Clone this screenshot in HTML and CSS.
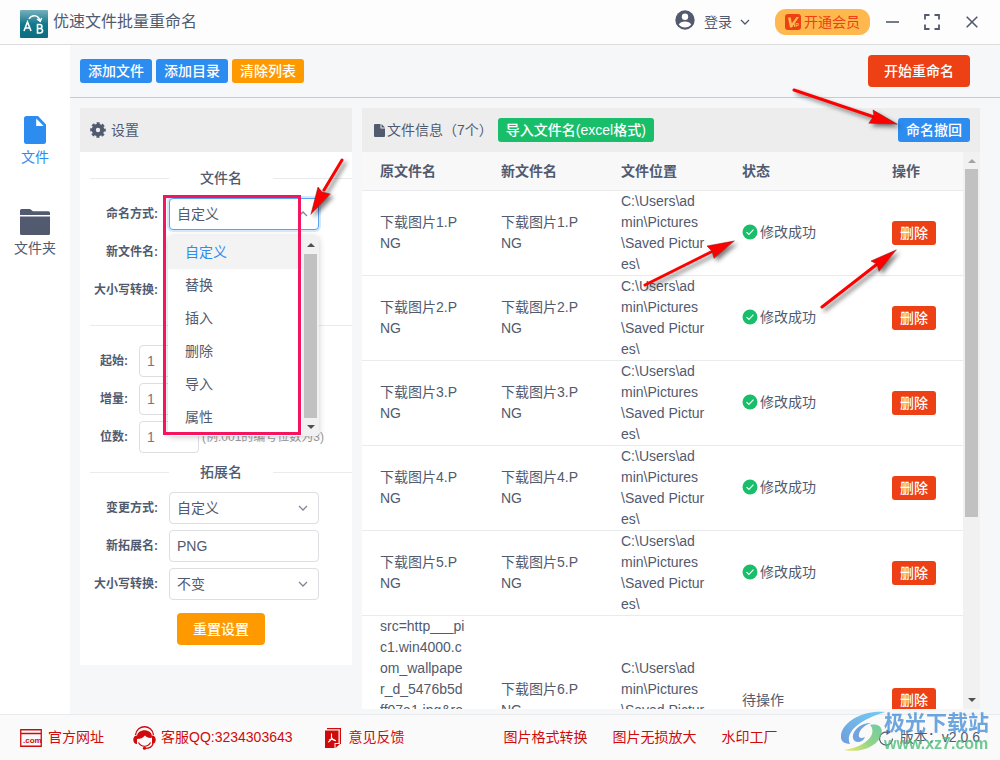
FILE: index.html
```html
<!DOCTYPE html>
<html lang="zh-CN">
<head>
<meta charset="utf-8">
<title>优速文件批量重命名</title>
<link rel="stylesheet" href="styles.css">
</head>
<body>
<svg class="defs" width="0" height="0" aria-hidden="true">
  <symbol id="chevron" viewBox="0 0 10 6"><path d="M1 1l4 4 4-4" fill="none" stroke="currentColor" stroke-width="1.3"/></symbol>
  <symbol id="ok" viewBox="0 0 16 16"><circle cx="8" cy="8" r="7.5" fill="#19be6b"/><path d="M4.5 8.2l2.4 2.3 4.6-4.8" fill="none" stroke="#fff" stroke-width="1.1"/></symbol>
</svg>
<div class="app">
  <header class="titlebar">
    <svg class="logo" width="28" height="28" viewBox="0 0 28 28">
      <defs><linearGradient id="lg" x1="0" y1="0" x2="0" y2="1"><stop offset="0" stop-color="#78b0bd"/><stop offset=".5" stop-color="#12788c"/><stop offset="1" stop-color="#0a6e80"/></linearGradient></defs>
      <rect width="28" height="28" rx="1" fill="url(#lg)"/>
      <g fill="none" stroke="#fff" stroke-width="1.6">
        <path d="M4 21l3.500-9 3.500 9M5.200 18h4.600"/>
        <path d="M17.500 14.500v8.500h2.500c3.400 0 3.400-4.500 0-4.500h-2.500h2.300c2.800 0 2.800-4 0-4z"/>
        <path d="M9 9c2.500-4.500 9-4.500 11 1.500M17 9l3.200 2.400 1.500-3.400" stroke-width="1.4"/>
      </g>
    </svg>
    <h1 class="title">优速文件批量重命名</h1>
    <button class="plain login">
      <svg width="20" height="20" viewBox="0 0 20 20"><circle cx="10" cy="10" r="9.700" fill="currentColor"/><circle cx="10" cy="6.700" r="3.200" fill="#fff"/><path d="M3.800 14.400c1.700-4 10.700-4 12.400 0-2.800 4-9.600 4-12.400 0z" fill="#fff"/></svg>
      <span>登录</span>
      <svg width="10" height="6"><use href="#chevron"/></svg>
    </button>
    <button class="vip">
      <svg width="16" height="16" viewBox="0 0 16 16"><rect width="16" height="16" rx="3" fill="#ed4014"/><path d="M3 3.500h2.800l1 6 4.700-6.500h2.500L7 13.500H5z" fill="#ffb84d"/><path d="M9.500 13V9.500M11 13V9.500h2.300v2H11" stroke="#ffb84d" stroke-width=".9" fill="none"/></svg>
      <span>开通会员</span>
    </button>
    <button class="plain win min" aria-label="最小化"><svg width="14" height="16" viewBox="0 0 14 16"><path d="M0 8h13" stroke="currentColor" stroke-width="1.600"/></svg></button>
    <button class="plain win max" aria-label="最大化"><svg width="16" height="16" viewBox="0 0 16 16"><path d="M1 5.500V1h4.500M10.500 1H15v4.500M15 10.500V15h-4.500M5.500 15H1v-4.500" fill="none" stroke="currentColor" stroke-width="1.800"/></svg></button>
    <button class="plain win" aria-label="关闭"><svg width="12" height="12" viewBox="0 0 12 12"><path d="M.7.700l10.600 10.600M11.300.700L.7 11.300" stroke="currentColor" stroke-width="1.600"/></svg></button>
  </header>

  <div class="body">
    <nav class="side">
      <a class="nav active" href="#">
        <svg width="22" height="28" viewBox="0 0 22 28"><path d="M2.500 0H14l8 8.500V25.500a2.500 2.500 0 0 1-2.500 2.500h-17A2.500 2.500 0 0 1 0 25.500v-23A2.500 2.500 0 0 1 2.500 0z" fill="currentColor"/><path d="M12.200 2.500v7.500h7.500z" fill="#fff"/></svg>
        <span>文件</span>
      </a>
      <a class="nav" href="#">
        <svg width="30" height="26" viewBox="0 0 30 26"><path d="M0 6V1.500Q0 0 1.500 0H10l3 2.200h15.500Q30 2.200 30 3.700V6zM0 7.500h30V24.500q0 1.500-1.500 1.500h-27Q0 26 0 24.500z" fill="currentColor"/></svg>
        <span>文件夹</span>
      </a>
    </nav>

    <main class="main">
      <div class="toolbar">
        <button class="btn blue">添加文件</button>
        <button class="btn blue">添加目录</button>
        <button class="btn orange">清除列表</button>
        <button class="btn big red end">开始重命名</button>
      </div>

      <div class="content">
        <form class="settings">
          <div class="panel-head">
            <svg class="gear" width="16" height="16" viewBox="0 0 16 16"><g fill="none" stroke="currentColor"><circle cx="8" cy="8" r="4.200" stroke-width="4"/><circle cx="8" cy="8" r="6.600" stroke-width="2.400" stroke-dasharray="3 2.184" stroke-dashoffset="1.500"/></g></svg>
            <span>设置</span>
          </div>
          <div class="fields">
            <h2 class="divider">文件名</h2>
            <div class="rows">
              <div class="row">
                <label for="mode">命名方式:</label>
                <div class="select focus">
                  <select id="mode"><option>自定义</option></select>
                  <svg class="chev up" width="10" height="6"><use href="#chevron"/></svg>
                  <div class="menu">
                    <ul class="options">
                      <li class="chosen">自定义</li><li>替换</li><li>插入</li><li>删除</li><li>导入</li><li>属性</li>
                    </ul>
                    <div class="bar"><i class="tri up"></i><i class="thumb"></i><i class="tri down"></i></div>
                  </div>
                  <div class="mark"></div>
                </div>
              </div>
              <div class="row"><label for="name">新文件名:</label><input class="box" id="name" type="text"></div>
              <div class="row"><label for="case">大小写转换:</label><div class="select"><select id="case"></select></div></div>
            </div>
            <hr class="line">
            <div class="rows nums">
              <div class="row"><label for="start">起始:</label><input class="box" id="start" type="text" value="1"></div>
              <div class="row"><label for="step">增量:</label><input class="box" id="step" type="text" value="1"></div>
              <div class="row"><label for="digits">位数:</label><input class="box" id="digits" type="text" value="1"><span class="hint">(例:001的编号位数为3)</span></div>
            </div>
            <h2 class="divider second">拓展名</h2>
            <div class="rows">
              <div class="row"><label for="extmode">变更方式:</label><div class="select"><select id="extmode"><option>自定义</option></select><svg class="chev" width="10" height="6"><use href="#chevron"/></svg></div></div>
              <div class="row"><label for="ext">新拓展名:</label><input class="box" id="ext" type="text" value="PNG"></div>
              <div class="row"><label for="extcase">大小写转换:</label><div class="select"><select id="extcase"><option>不变</option></select><svg class="chev" width="10" height="6"><use href="#chevron"/></svg></div></div>
            </div>
            <button type="button" class="btn big orange reset">重置设置</button>
          </div>
        </form>

        <section class="list">
          <div class="panel-head files">
            <svg width="11" height="13" viewBox="0 0 11 13"><path d="M1 0h5.500v4.500H11V12q0 1-1 1H1q-1 0-1-1V1q0-1 1-1zM7.500 0L11 3.500H7.500z" fill="currentColor"/></svg>
            <span>文件信息（7个）</span>
            <button class="btn green">导入文件名(excel格式)</button>
            <button class="btn blue end">命名撤回</button>
          </div>
          <div class="scroll">
            <div class="view">
              <table>
                <colgroup><col class="c1"><col class="c2"><col class="c1"><col class="c4"><col></colgroup>
                <thead><tr><th>原文件名</th><th>新文件名</th><th>文件位置</th><th>状态</th><th>操作</th></tr></thead>
                <tbody>
                  <tr><td>下载图片1.PNG</td><td>下载图片1.PNG</td><td>C:\Users\admin\Pictures\Saved Pictures\</td><td><span class="done"><svg width="16" height="16"><use href="#ok"/></svg>修改成功</span></td><td><button class="btn red">删除</button></td></tr>
                  <tr><td>下载图片2.PNG</td><td>下载图片2.PNG</td><td>C:\Users\admin\Pictures\Saved Pictures\</td><td><span class="done"><svg width="16" height="16"><use href="#ok"/></svg>修改成功</span></td><td><button class="btn red">删除</button></td></tr>
                  <tr><td>下载图片3.PNG</td><td>下载图片3.PNG</td><td>C:\Users\admin\Pictures\Saved Pictures\</td><td><span class="done"><svg width="16" height="16"><use href="#ok"/></svg>修改成功</span></td><td><button class="btn red">删除</button></td></tr>
                  <tr><td>下载图片4.PNG</td><td>下载图片4.PNG</td><td>C:\Users\admin\Pictures\Saved Pictures\</td><td><span class="done"><svg width="16" height="16"><use href="#ok"/></svg>修改成功</span></td><td><button class="btn red">删除</button></td></tr>
                  <tr><td>下载图片5.PNG</td><td>下载图片5.PNG</td><td>C:\Users\admin\Pictures\Saved Pictures\</td><td><span class="done"><svg width="16" height="16"><use href="#ok"/></svg>修改成功</span></td><td><button class="btn red">删除</button></td></tr>
                  <tr><td>src=http___pic1.win4000.com_wallpaper_d_5476b5dff07a1.jpg&amp;refer=http___pic1.win4000.com.jpg</td><td>下载图片6.PNG</td><td>C:\Users\admin\Pictures\Saved Pictures\</td><td>待操作</td><td><button class="btn red">删除</button></td></tr>
                </tbody>
              </table>
            </div>
            <div class="bar wide"><i class="tri up dim"></i><i class="thumb"></i><i class="tri down"></i></div>
          </div>
        </section>
      </div>
    </main>
  </div>

  <footer class="footer">
    <a class="site" href="#">
      <svg width="22" height="18" viewBox="0 0 22 18"><path d="M.75.750h20.500v16.500H.75zM.75 4.500h20.500" fill="none" stroke="currentColor" stroke-width="1.300"/><text class="com" x="3" y="14">.com</text></svg>
      <span>官方网址</span>
    </a>
    <a class="service" href="#">
      <svg width="23" height="24" viewBox="0 0 23 24"><path d="M2.500 9C4-2 19-2 20.500 9" fill="none" stroke="currentColor" stroke-width="1.300"/><path d="M4 10.500C4 2 19 2 19 10.500l-.5 1.500c-3 .3-5-.8-6.500-2.500-2 2.500-4.500 3.500-8 3.500z" fill="currentColor"/><path d="M4 9.500v8.500C-1 18-1 9.500 4 9.500zM19 9.500v8.500c5 0 5-8.500 0-8.500z" fill="currentColor"/><path d="M5.500 16.500c2.500 5 9.500 5 12 0M20 18c-1 3-4 4.500-8 4.500" fill="none" stroke="currentColor" stroke-width="1.200"/><circle cx="11.500" cy="22.200" r="1.600" fill="currentColor"/></svg>
      <span>客服QQ:3234303643</span>
    </a>
    <a class="feedback" href="#">
      <svg width="16" height="20" viewBox="0 0 16 20"><path d="M2 .6h13.400V16" fill="none" stroke="currentColor" stroke-width="1.200"/><path d="M0 2.500h13.500V15h-4v5H0zM10.500 16H15l-4.500 4z" fill="currentColor"/><path d="M6.500 5.500v4c0 2-2 4-3.500 4.500M6.500 9.500c.8 2 2.500 3 4.500 3.200M4 12c2-.8 4-.8 6 0" fill="none" stroke="#fff" stroke-width="1.100"/></svg>
      <span>意见反馈</span>
    </a>
    <a class="first-tool" href="#">图片格式转换</a>
    <a class="tool" href="#">图片无损放大</a>
    <a class="tool" href="#">水印工厂</a>
    <div class="version">
      <svg width="16" height="18" viewBox="0 0 16 18"><path d="M9.500 3.300a6.500 6.500 0 1 0 5 6.200" fill="none" stroke="currentColor" stroke-width="1.200"/><path d="M8.500.500l4.500 2.500-4.500 3z" fill="currentColor"/></svg>
      <span>版本：v2.0.6</span>
      <div class="watermark">
        <svg width="44" height="42" viewBox="0 0 44 42">
          <defs>
            <linearGradient id="wb" x1="1" y1="0" x2="0" y2="1"><stop offset="0" stop-color="#55c4f2"/><stop offset="1" stop-color="#4b86d6"/></linearGradient>
            <linearGradient id="wg" x1="1" y1="0" x2="0" y2="1"><stop offset="0" stop-color="#52c08c"/><stop offset=".5" stop-color="#75cb70"/><stop offset="1" stop-color="#e8e645"/></linearGradient>
          </defs>
          <path d="M44 1C23-1 2 10 0 24c-1 6 3 9 9 9-5-10 6-23 35-32z" fill="url(#wb)"/>
          <path d="M29 14c9-2 15 3 10 13C33 37 18 42 3 39c14-2 25-8 28-16 1-4 0-7-2-9z" fill="url(#wg)"/>
          <path d="M30 12c-11 0-19 8-18 15 1 6 10 5 12-1-4 2-7 1-6-3 1-5 6-9 12-11z" fill="#4f8fd8"/>
        </svg>
        <div class="wm-text"><b class="wm-name">极光下载站</b><b class="wm-url">www.xz7.com</b></div>
      </div>
    </div>
  </footer>

  <svg class="arrows" width="1000" height="400" viewBox="0 0 1000 400" aria-hidden="true">
    <g fill="#f00" stroke="#f00" stroke-linecap="round" stroke-linejoin="round">
      <g stroke-width="3"><path d="M794 90L874 117M342 160L324 190M645 285L711 252M822 307L876 265"/></g>
      <g stroke="#7a1010" stroke-width=".5">
        <path d="M897 124L873 110l1 6-5 7z"/>
        <path d="M311 214l7-27 4 5 8 2z"/>
        <path d="M734 241l-27 5 5 5 2 7z"/>
        <path d="M896 250l-25 11 6 3 2 7z"/>
      </g>
    </g>
  </svg>
</div>
</body>
</html>
```

FILE: styles.css
```css
* { box-sizing: border-box; }
body {
  margin: 0;
  color: #515a6e;
  font: 14px/21px "Liberation Sans", "Noto Sans CJK SC", sans-serif;
}
button, input, select { font: inherit; color: inherit; margin: 0; }
button { cursor: pointer; }
a { color: inherit; text-decoration: none; }
h1, h2, ul { margin: 0; padding: 0; font-weight: 400; }
svg { display: block; flex: none; }
.defs { position: absolute; }
.app { position: relative; display: flex; flex-direction: column; height: 100vh; overflow: hidden; background: #fff; }

/* title bar */
.titlebar { display: flex; align-items: center; height: 45px; padding: 0 22px 0 20px; border-bottom: 1px solid #dcdcdc; background: #fdfdfd; }
.logo { margin-top: 4px; }
.title { margin-left: 5px; font-size: 16px; line-height: 24px; }
.plain { display: flex; align-items: center; padding: 0; border: 0; background: none; }
.login { gap: 8px; margin-left: auto; }
.login > svg:first-child { margin: 0 1px 4px 0; }
.vip { display: flex; align-items: center; gap: 3px; height: 26px; margin: 0 16px 0 25px; padding: 0 10px; border: 0; border-radius: 11px; background: #ffb84d; color: #ed4014; }
.win { margin-left: 26px; }
.min { margin-left: 0; }
.max { margin-left: 24px; }

/* side navigation */
.body { display: flex; flex: 1; min-height: 0; }
.side { display: flex; flex-direction: column; gap: 41px; width: 70px; padding-top: 71px; background: #fff; }
.nav { display: flex; flex-direction: column; align-items: center; gap: 3px; }
.active { color: #2d8cf0; }
.main { display: flex; flex-direction: column; flex: 1; min-width: 0; background: #f5f7f9; }

/* buttons */
.btn { height: 24px; padding: 0 7px; border: 1px solid transparent; border-radius: 3px; color: #fff; font-weight: 500; line-height: 21px; white-space: nowrap; }
.big { height: 32px; padding: 0 15px; border-radius: 4px; }
.blue { background: #2d8cf0; }
.orange { background: #f90; }
.red { background: #ed4014; }
.green { background: #19be6b; }
.end { margin-left: auto; }

.toolbar { display: flex; align-items: center; gap: 4px; padding: 10px 30px 10px 10px; border-bottom: 1px solid #c8cacd; }
.content { display: flex; flex: 1; gap: 10px; min-height: 0; padding: 10px 20px 5px 10px; }
.panel-head { display: flex; align-items: center; gap: 5px; height: 44px; padding: 0 10px; background: #ededed; }

/* settings */
.settings { align-self: flex-start; width: 272px; background: #fff; }
.fields { display: flex; flex-direction: column; padding: 15px 0 20px; }
.divider { display: flex; align-items: center; gap: 31px; margin-left: 10px; font-size: 14px; font-weight: 500; line-height: 22px; }
.divider::before, .divider::after { content: ""; flex: 1; border-top: 1px solid #e8eaec; }
.second { margin-top: 8px; }
.rows { display: flex; flex-direction: column; gap: 6px; margin-top: 9px; }
.row { display: flex; align-items: center; gap: 10px; }
.row label { width: 79px; padding-right: 1px; font-size: 12px; font-weight: 700; text-align: right; white-space: nowrap; }
.box, .select select { width: 150px; height: 32px; padding: 0 7px; border: 1px solid #dcdee2; border-radius: 4px; background: #fff; outline: 0; }
.select { position: relative; }
.select select { appearance: none; display: block; }
.chev { position: absolute; right: 11px; top: 13px; color: #808695; }
.chev.up { transform: rotate(180deg); }
.focus select { border-color: #57a3f3; box-shadow: 0 0 0 2px rgba(45, 140, 240, .2); }
.line { width: auto; margin: 19px 0 10px 10px; border: 0; border-top: 1px solid #e8eaec; }
.nums label { width: 49px; }
.nums .box { width: 60px; color: #777; }
.hint { margin-left: -7px; color: #999; font-size: 12px; white-space: nowrap; }
.reset { align-self: center; margin: 13px 0 0 10px; }

/* opened drop-down */
.menu { position: absolute; z-index: 2; top: 38px; left: -1px; display: flex; width: 151px; height: 200px; border-radius: 4px; background: #fff; box-shadow: 0 1px 6px rgba(0, 0, 0, .2); overflow: hidden; }
.options { flex: 1; list-style: none; }
.options li { padding: 6px 17px; }
.options .chosen { background: #f3f3f3; color: #2d8cf0; }
.mark { position: absolute; z-index: 3; top: -3px; left: -6px; width: 138px; height: 240px; border: 3px solid #f5145f; }
.bar { display: flex; flex-direction: column; align-items: center; gap: 7px; width: 17px; padding: 7px 0; background: #f1f1f1; }
.thumb { flex: 1; width: 13px; background: #c1c1c1; }
.tri { border: 4px solid transparent; border-top-width: 0; border-bottom: 4px solid #505050; }
.tri.down { border-top: 4px solid #505050; border-bottom-width: 0; }
.tri.dim { border-bottom-color: #a3a3a3; }

/* file list */
.list { display: flex; flex-direction: column; flex: 1; min-width: 0; background: #fff; }
.files { flex: none; gap: 2px; padding: 0 10px 0 12px; }
.files .green { margin-left: 3px; }
.scroll { display: flex; flex: 1; min-height: 0; }
.view { flex: 1; min-width: 0; overflow: hidden; }
table { width: 100%; border-spacing: 0; table-layout: fixed; }
.c1 { width: 121px; }
.c2 { width: 120px; }
.c4 { width: 150px; }
th, td { padding: 0 18px; border-bottom: 1px solid #e8eaec; text-align: left; vertical-align: middle; word-break: break-all; }
th { height: 39px; background: #f8f8f9; font-weight: 700; }
th:last-child, td:last-child { padding-right: 0; }
td .btn { display: block; padding: 0 7px; }
.done { display: flex; align-items: center; gap: 2px; padding-bottom: 2px; white-space: nowrap; }
.wide { gap: 6px; }
.wide .thumb { flex: none; height: 64%; }
.wide .down { margin-top: auto; }

/* footer */
.footer { display: flex; align-items: center; height: 46px; padding: 0 20px; border-top: 1px solid #e8eaec; background: #fafafa; color: #d00a0a; white-space: nowrap; }
.footer a { display: flex; align-items: center; gap: 6px; }
.com { font: 700 8px "Liberation Sans", sans-serif; fill: currentColor; }
.footer .service { gap: 5px; margin-left: 29px; }
.footer .feedback { gap: 8px; margin-left: 32px; }
.first-tool { margin-left: 99px; }
.tool { margin-left: 25px; }
.version { position: relative; display: flex; align-items: center; gap: 6px; margin-left: auto; color: #515a6e; }
.watermark { position: absolute; right: -9px; bottom: -5px; display: flex; align-items: center; opacity: .8; }
.wm-text { display: flex; flex-direction: column; margin-left: -1px; }
.wm-name { color: #4a90d9; font-size: 21px; line-height: 24px; }
.wm-url { color: #4dbd7a; font-size: 16px; line-height: 18px; }

.arrows { position: absolute; z-index: 5; top: 0; left: 0; pointer-events: none; filter: drop-shadow(3px 3px 2px rgba(0, 0, 0, .5)); }
```
